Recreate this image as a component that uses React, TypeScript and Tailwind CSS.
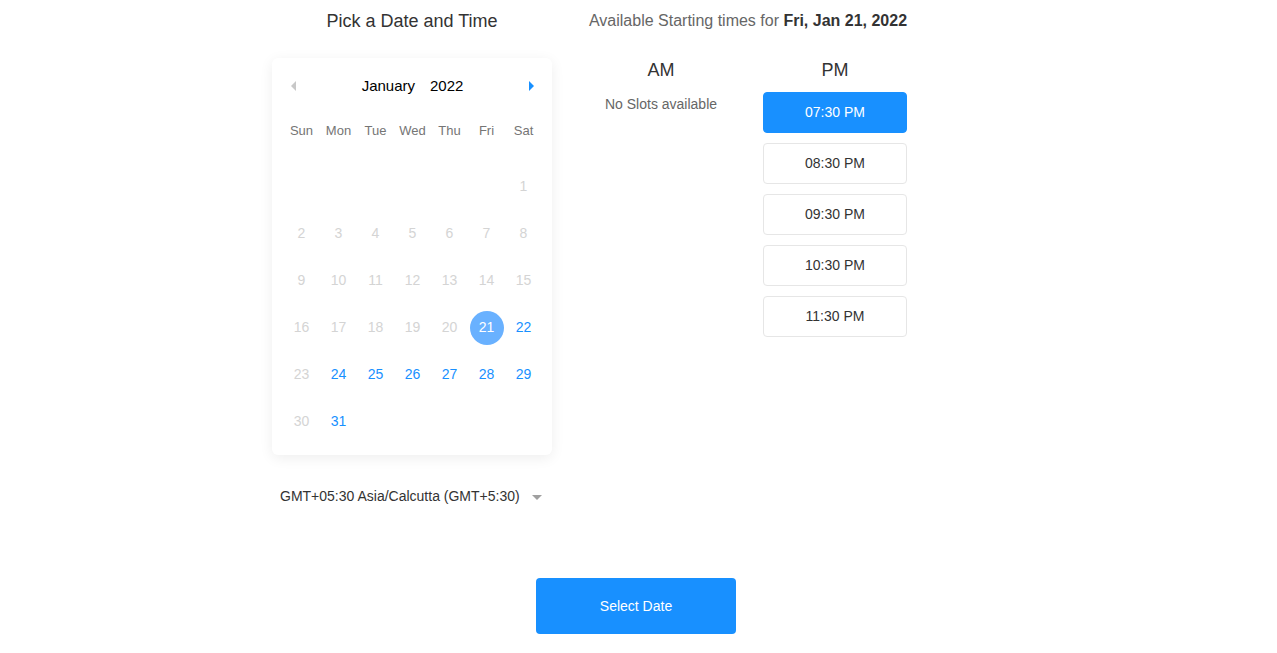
import React, { useState } from 'react';

const weekDays = ['Sun', 'Mon', 'Tue', 'Wed', 'Thu', 'Fri', 'Sat'];
const slots = ['07:30 PM', '08:30 PM', '09:30 PM', '10:30 PM', '11:30 PM'];

const isAvailable = (d: number) => d >= 21 && d !== 23 && d !== 30;

const Calendar: React.FC<{ selected: number; onSelect: (d: number) => void }> = ({ selected, onSelect }) => {
  // Jan 2022 starts on a Saturday
  const cells: (number | null)[] = [...Array(6).fill(null), ...Array.from({ length: 31 }, (_, i) => i + 1)];

  return (
    <div className="w-[280px] rounded-md bg-white pl-[11px] pr-[10px] pt-[10px] pb-[10px] shadow-[0_3px_14px_rgba(0,0,0,0.07)]">
      {/* Month header */}
      <div className="flex h-[36px] items-center justify-between px-[8px]">
        <span className="h-0 w-0 border-y-[5px] border-r-[5px] border-y-transparent border-r-[#c8c8c8]" />
        <div className="flex gap-[15px] text-[15px] text-black">
          <span>January</span>
          <span>2022</span>
        </div>
        <span className="h-0 w-0 border-y-[5px] border-l-[5px] border-y-transparent border-l-[#1890ff]" />
      </div>

      <div className="mt-[7px] mb-[12px] grid h-[40px] w-[259px] grid-cols-7 items-center text-center text-[13px] text-[#757575]">
        {weekDays.map((w) => (
          <span key={w}>{w}</span>
        ))}
      </div>

      <div className="grid w-[259px] grid-cols-7">
        {cells.map((d, i) => (
          <div key={i} className="flex h-[47px] items-center justify-center text-[14px]">
            {d !== null &&
              (d === selected ? (
                <button className="flex h-[34px] w-[34px] items-center justify-center rounded-full bg-[#69b1ff] text-white">
                  {d}
                </button>
              ) : isAvailable(d) ? (
                <button onClick={() => onSelect(d)} className="text-[#1890ff]">
                  {d}
                </button>
              ) : (
                <span className="text-[#d4d4d4]">{d}</span>
              ))}
          </div>
        ))}
      </div>
    </div>
  );
};

const App: React.FC = () => {
  const [selected, setSelected] = useState(21);
  const [slot, setSlot] = useState('07:30 PM');

  return (
    <div className="min-h-[653px] bg-white font-['Liberation_Sans',Arial,sans-serif] text-[#333]">
      <div className="flex gap-[37px] pl-[272px] pt-[9px]">
        {/* Left column */}
        <div className="w-[280px]">
          <h2 className="h-[24px] text-center text-[18px] leading-[24px] text-[#333]">Pick a Date and Time</h2>
          <div className="mt-[25px]">
            <Calendar selected={selected} onSelect={setSelected} />
          </div>
          <div className="mt-[31px] flex h-[20px] items-center justify-between pl-[8px] pr-[10px] text-[14px] text-[#333]">
            <span>GMT+05:30 Asia/Calcutta (GMT+5:30)</span>
            <span className="mt-[2px] h-0 w-0 border-x-[5px] border-t-[5px] border-x-transparent border-t-[#a0a0a0]" />
          </div>
        </div>

        {/* Right column */}
        <div className="w-[318px]">
          <div className="flex h-[24px] justify-center">
            <h2 className="whitespace-nowrap text-[16px] leading-[24px] text-[#666]">
              Available Starting times for <b className="text-[#333]">Fri, Jan {selected}, 2022</b>
            </h2>
          </div>
          <div className="mt-[25px] flex gap-[30px]">
            <div className="w-[144px] text-center">
              <h3 className="h-[24px] text-[18px] leading-[24px] text-[#333]">AM</h3>
              <p className="mt-[12px] text-[14px] leading-[20px] text-[#666]">No Slots available</p>
            </div>
            <div className="w-[144px] text-center">
              <h3 className="h-[24px] text-[18px] leading-[24px] text-[#333]">PM</h3>
              <div className="mt-[10px] flex flex-col gap-[10px]">
                {slots.map((s) => (
                  <button
                    key={s}
                    onClick={() => setSlot(s)}
                    className={`h-[41px] w-[144px] rounded-[4px] border text-[14px] ${
                      slot === s ? 'border-[#1890ff] bg-[#1890ff] text-white' : 'border-[#e6e6e6] bg-white text-[#333]'
                    }`}
                  >
                    {s}
                  </button>
                ))}
              </div>
            </div>
          </div>
        </div>
      </div>

      <div className="mt-[72px] flex justify-center pr-[5px]">
        <button className="h-[56px] w-[200px] rounded-[4px] bg-[#1890ff] text-[14px] text-white">Select Date</button>
      </div>
    </div>
  );
};

export default App;
